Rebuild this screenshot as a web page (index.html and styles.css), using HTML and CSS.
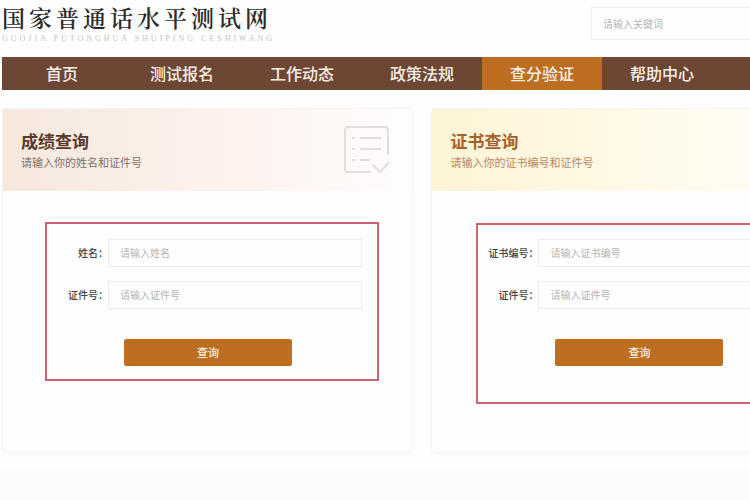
FILE: index.html
```html
<!DOCTYPE html>
<html lang="zh-CN">
<head>
    <meta charset="UTF-8">
    <meta name="viewport" content="width=device-width, initial-scale=1.0">
    <title>国家普通话水平测试网</title>
    <link rel="stylesheet" href="styles.css">
</head>
<body>
    <header class="header">
        <div class="logo">
            <div class="logo-name">国家普通话水平测试网</div>
            <div class="logo-pinyin">GUOJIA PUTONGHUA SHUIPING CESHIWANG</div>
        </div>
        <input class="search" type="text" placeholder="请输入关键词" aria-label="搜索">
    </header>

    <nav class="nav">
        <a href="#">首页</a>
        <a href="#">测试报名</a>
        <a href="#">工作动态</a>
        <a href="#">政策法规</a>
        <a href="#" class="active">查分验证</a>
        <a href="#">帮助中心</a>
    </nav>

    <main class="cards">
        <section class="card score">
            <div class="card-head">
                <div>
                    <h2>成绩查询</h2>
                    <p>请输入你的姓名和证件号</p>
                </div>
                <svg class="card-icon" viewBox="0 0 46 48" fill="none" stroke="#e2dedd" stroke-width="2">
                    <path d="M27 46H4a3 3 0 0 1-3-3V4a3 3 0 0 1 3-3h37a3 3 0 0 1 3 3v25"/>
                    <path d="M8 12h3M16 12h21M8 23h3M16 23h21M8 34h3M16 34h10"/>
                    <path d="M29 39l7 7 9-10"/>
                </svg>
            </div>
            <form class="query">
                <div class="row">
                    <label for="name">姓名：</label>
                    <input type="text" id="name" placeholder="请输入姓名">
                </div>
                <div class="row">
                    <label for="id-number">证件号：</label>
                    <input type="text" id="id-number" placeholder="请输入证件号">
                </div>
                <button type="button">查询</button>
            </form>
        </section>

        <section class="card cert">
            <div class="card-head">
                <div>
                    <h2>证书查询</h2>
                    <p>请输入你的证书编号和证件号</p>
                </div>
            </div>
            <form class="query">
                <div class="row">
                    <label for="cert-number">证书编号：</label>
                    <input type="text" id="cert-number" placeholder="请输入证书编号">
                </div>
                <div class="row">
                    <label for="cert-id-number">证件号：</label>
                    <input type="text" id="cert-id-number" placeholder="请输入证件号">
                </div>
                <button type="button">查询</button>
            </form>
        </section>
    </main>

    <footer class="footer"></footer>
</body>
</html>
```
FILE: styles.css
```css
* {
    box-sizing: border-box;
}
body {
    margin: 0;
    min-height: 100vh;
    display: flex;
    flex-direction: column;
    padding-left: 2px;
    background-color: #fefefe;
    font-family: "Noto Sans CJK SC", sans-serif;
    overflow-x: hidden;
}
h2, p {
    margin: 0;
}
.header {
    display: flex;
    justify-content: space-between;
    align-items: flex-start;
    height: 57px;
    padding-top: 4px;
}
.logo {
    white-space: nowrap;
}
.logo-name {
    font-family: "Noto Serif CJK SC", "Noto Sans CJK SC", serif;
    font-size: 23px;
    font-weight: 600;
    line-height: 28px;
    letter-spacing: 4px;
    color: #2b2b2b;
}
.logo-pinyin {
    font-family: "Liberation Serif", serif;
    font-size: 8px;
    line-height: 13px;
    letter-spacing: 3px;
    color: #c4c4c4;
}
.search {
    width: 180px;
    height: 33px;
    margin-top: 3px;
    margin-right: -21px;
}
input {
    padding: 0 11px;
    border: 1px solid #ececf0;
    background-color: #fefefe;
    font-family: inherit;
    font-size: 10px;
    color: #333;
}
input::placeholder {
    color: #b4b4b4;
}

.nav {
    display: flex;
    height: 33px;
    background-color: #6d4733;
}
.nav a {
    flex: 0 0 120px;
    line-height: 33px;
    text-align: center;
    font-size: 16px;
    font-weight: 500;
    color: #f9efe8;
    text-decoration: none;
}
.nav .active {
    background-color: #bd6e21;
}

.cards {
    display: grid;
    grid-template-columns: repeat(2, 55%);
    gap: 18px;
    margin-top: 18px;
}
.card {
    border: 1px solid #f3f3f3;
    border-radius: 4px;
    min-height: 345px;
}
.card-head {
    display: flex;
    justify-content: space-between;
    align-items: center;
    height: 82px;
    padding: 0 22px 0 18px;
}
.card-head h2 {
    font-size: 17px;
    line-height: 24px;
}
.card-head p {
    font-size: 11px;
    line-height: 18px;
}
.card-icon {
    width: 46px;
    height: 48px;
}
.score .card-head {
    background: linear-gradient(to right, #f6e8dd, #fdf3ef 60%, #fefdfd);
    color: #59392a;
}
.score p {
    color: #85706a;
}
.cert .card-head {
    background: linear-gradient(to right, #fef4d6, #fffae9 55%, #fefefe);
    color: #a7622a;
}
.cert p {
    color: #b98663;
}

/* query forms */
.query {
    display: flex;
    flex-direction: column;
    gap: 14px;
    margin: 31px 33px 0 42px;
    padding: 15px 15px 13px 0;
    border: 2px solid #d0626f;
}
.cert .query {
    margin: 32px 32px 0 44px;
    padding: 14px 15px 36px 0;
}
.row {
    display: grid;
    grid-template-columns: 61px 1fr;
    align-items: center;
}
.cert .row {
    grid-template-columns: 60px 1fr;
}
.row label {
    justify-self: end;
    padding-bottom: 2px;
    font-size: 10px;
    font-weight: 500;
    white-space: nowrap;
    color: #444;
}
.row input {
    width: 100%;
    height: 28px;
    padding-bottom: 2px;
}
.query button {
    width: 168px;
    height: 27px;
    margin: 16px 0 0 77px;
    padding: 0 0 2px;
    border: none;
    border-radius: 2px;
    background-color: #bd6e21;
    font-family: inherit;
    font-size: 11px;
    font-weight: 500;
    color: #fdf0e2;
    cursor: pointer;
}

.footer {
    flex: 1;
    margin: 15px 0 0 -2px;
    background-color: #fbfbfb;
}
```
